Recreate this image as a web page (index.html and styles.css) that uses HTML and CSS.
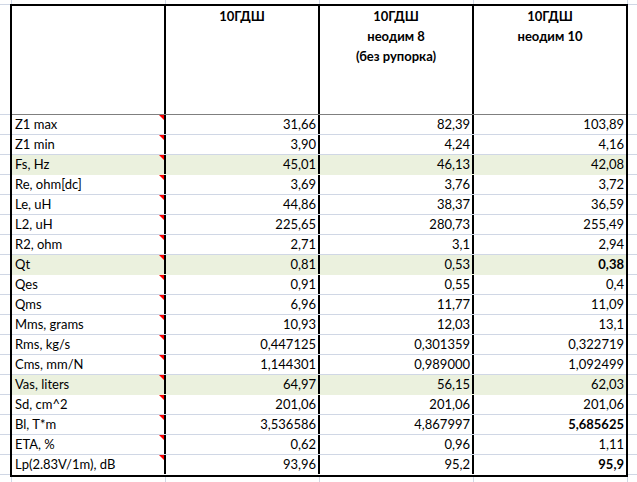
FILE: index.html
```html
<!DOCTYPE html>
<html lang="ru">
<head>
<meta charset="utf-8">
<title>10ГДШ</title>
<link rel="stylesheet" href="styles.css">
</head>
<body>
<div class="sheet">
  <div class="table">
    <div class="row head">
      <div class="cell label"></div>
      <div class="cell">10ГДШ</div>
      <div class="cell">10ГДШ<br>неодим 8<br>(без рупорка)</div>
      <div class="cell">10ГДШ<br>неодим 10</div>
    </div>
    <div class="row"><div class="cell label note">Z1 max</div><div class="cell">31,66</div><div class="cell">82,39</div><div class="cell">103,89</div></div>
    <div class="row"><div class="cell label note">Z1 min</div><div class="cell">3,90</div><div class="cell">4,24</div><div class="cell">4,16</div></div>
    <div class="row hl"><div class="cell label note">Fs, Hz</div><div class="cell">45,01</div><div class="cell">46,13</div><div class="cell">42,08</div></div>
    <div class="row"><div class="cell label note">Re, ohm[dc]</div><div class="cell">3,69</div><div class="cell">3,76</div><div class="cell">3,72</div></div>
    <div class="row"><div class="cell label note">Le, uH</div><div class="cell">44,86</div><div class="cell">38,37</div><div class="cell">36,59</div></div>
    <div class="row"><div class="cell label note">L2, uH</div><div class="cell">225,65</div><div class="cell">280,73</div><div class="cell">255,49</div></div>
    <div class="row"><div class="cell label note">R2, ohm</div><div class="cell">2,71</div><div class="cell">3,1</div><div class="cell">2,94</div></div>
    <div class="row hl"><div class="cell label note">Qt</div><div class="cell">0,81</div><div class="cell">0,53</div><div class="cell bold">0,38</div></div>
    <div class="row"><div class="cell label note">Qes</div><div class="cell">0,91</div><div class="cell">0,55</div><div class="cell">0,4</div></div>
    <div class="row"><div class="cell label note">Qms</div><div class="cell">6,96</div><div class="cell">11,77</div><div class="cell">11,09</div></div>
    <div class="row"><div class="cell label note">Mms, grams</div><div class="cell">10,93</div><div class="cell">12,03</div><div class="cell">13,1</div></div>
    <div class="row"><div class="cell label note">Rms, kg/s</div><div class="cell">0,447125</div><div class="cell">0,301359</div><div class="cell">0,322719</div></div>
    <div class="row"><div class="cell label note">Cms, mm/N</div><div class="cell">1,144301</div><div class="cell">0,989000</div><div class="cell">1,092499</div></div>
    <div class="row hl"><div class="cell label note">Vas, liters</div><div class="cell">64,97</div><div class="cell">56,15</div><div class="cell">62,03</div></div>
    <div class="row"><div class="cell label note">Sd, cm^2</div><div class="cell">201,06</div><div class="cell">201,06</div><div class="cell">201,06</div></div>
    <div class="row"><div class="cell label note">Bl, T*m</div><div class="cell">3,536586</div><div class="cell">4,867997</div><div class="cell bold">5,685625</div></div>
    <div class="row"><div class="cell label note">ETA, %</div><div class="cell">0,62</div><div class="cell">0,96</div><div class="cell">1,11</div></div>
    <div class="row"><div class="cell label note">Lp(2.83V/1m), dB</div><div class="cell">93,96</div><div class="cell">95,2</div><div class="cell bold">95,9</div></div>
  </div>
</div>
</body>
</html>
```

FILE: styles.css
```css
* { box-sizing: border-box; }

html, body {
  margin: 0;
  padding: 0;
  background: #ffffff;
}

.sheet {
  width: 637px;
  height: 482px;
  overflow: hidden;
  padding: 4px 0 0 10px;
  font-family: Lato, "Liberation Sans", sans-serif;
  font-size: 13px;
  color: #000000;
  background-color: #ffffff;
  background-image:
    linear-gradient(to right, #d0d7e5 0 1px, transparent 1px),
    linear-gradient(to right, #d0d7e5 0 1px, transparent 1px),
    linear-gradient(#d0d7e5, #d0d7e5),
    repeating-linear-gradient(to bottom, #d0d7e5 0 1px, transparent 1px 20px);
  background-size:
    154px 4px,
    154px 6px,
    100% 1px,
    100% 368px;
  background-position:
    11px 0,
    11px 477px,
    0 4px,
    0 114px;
  background-repeat:
    repeat-x,
    repeat-x,
    no-repeat,
    no-repeat;
}

.table {
  width: 618px;
  border: 2px solid #000000;
  background: #ffffff;
}

.row {
  display: flex;
  height: 20px;
  border-bottom: 1px solid #d0d7e5;
}

.row:last-child {
  border-bottom: 1px solid #ffffff;
}

.row.hl {
  background: #ebf1de;
  border-bottom-color: #ebf1de;
}

.cell {
  width: 154px;
  border-left: 2px solid #000000;
  text-align: right;
  padding: 0 2px 0 2px;
  line-height: 19px;
  white-space: nowrap;
}

.cell.label {
  width: 152px;
  border-left: 0;
  text-align: left;
  padding-left: 3px;
  position: relative;
}

.cell.note::after {
  content: "";
  position: absolute;
  top: 0;
  right: 0;
  border-top: 5px solid #ff0000;
  border-left: 5px solid transparent;
}

.cell.bold {
  font-weight: 700;
}

.row.head {
  height: 109px;
  border-bottom: 1px solid #7f7f7f;
}

.row.head .cell {
  text-align: center;
  font-weight: 700;
  line-height: 20px;
  padding-top: 0;
}
```
